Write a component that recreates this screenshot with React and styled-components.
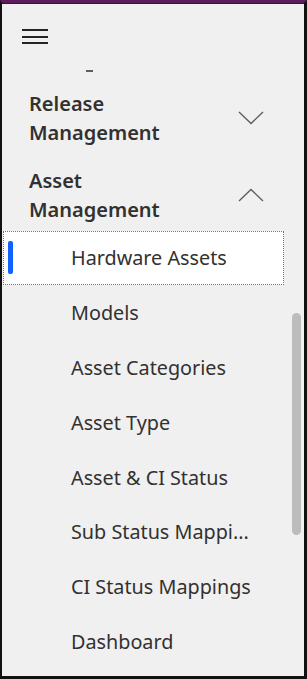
import React from 'react';
import styled, { createGlobalStyle } from 'styled-components';

const Global = createGlobalStyle`
  html, body {
    margin: 0;
    padding: 0;
    background: #ffffff;
  }
  * { box-sizing: border-box; }
`;

const Frame = styled.div`
  position: relative;
  width: 307px;
  height: 679px;
  background: #f0f0f0;
  border-left: 2px solid #111;
  border-right: 3px solid #111;
  border-bottom: 3px solid #111;
  border-top: 3px solid #5a1f5a;
  box-shadow: inset 0 1px 0 #222;
  overflow: hidden;
  font-family: "Noto Sans", "Open Sans", sans-serif;
  color: #323130;
`;

const Hamburger = styled.button`
  display: flex;
  flex-direction: column;
  gap: 4.5px;
  margin: 26px 0 0 20px;
  padding: 0;
  border: 0;
  background: none;
  width: 26px;

  span {
    display: block;
    height: 2px;
    background: #252423;
  }
`;

const Stub = styled.div`
  margin: 26px 0 0 84px;
  width: 7px;
  height: 2px;
  background: #605e5c;
`;

const Group = styled.div`
  display: flex;
  align-items: center;
  justify-content: space-between;
  padding: 0 40px 0 27px;
  margin-top: ${p => p.$top}px;
`;

const GroupTitle = styled.div`
  font-size: 20px;
  font-weight: 600;
  line-height: 29px;
  color: #323130;
`;

const Chevron = ({ up }) => (
  <svg width="26" height="14" viewBox="0 0 26 14">
    <polyline
      points={up ? '1,13 13,1.5 25,13' : '1,1 13,12.5 25,1'}
      fill="none"
      stroke="#605e5c"
      strokeWidth="1.4"
    />
  </svg>
);

const List = styled.ul`
  list-style: none;
  margin: 6.5px 0 0 1px;
  padding: 0;
  width: 281px;
`;

const Item = styled.li`
  position: relative;
  height: 54.8px;
  display: flex;
  align-items: center;
  padding-left: 68px;
  font-size: 19.8px;
  color: #323130;
  white-space: nowrap;
  background: ${p => (p.$active ? '#ffffff' : 'transparent')};
  outline: ${p => (p.$active ? '1px dotted #777' : 'none')};
  outline-offset: -1px;

  &::before {
    content: '';
    display: ${p => (p.$active ? 'block' : 'none')};
    position: absolute;
    left: 5px;
    top: 10px;
    width: 5px;
    height: 33px;
    border-radius: 2px;
    background: #0f62fe;
  }
`;

const ScrollThumb = styled.div`
  position: absolute;
  left: 290px;
  top: 310px;
  width: 9px;
  height: 222px;
  border-radius: 5px;
  background: #bcbcbc;
`;

const items = [
  'Hardware Assets',
  'Models',
  'Asset Categories',
  'Asset Type',
  'Asset & CI Status',
  'Sub Status Mappi...',
  'CI Status Mappings',
  'Dashboard',
];

export default function App() {
  return (
    <>
      <Global />
      <Frame>
        <Hamburger aria-label="menu">
          <span />
          <span />
          <span />
        </Hamburger>
        <Stub />
        <Group $top={17}>
          <GroupTitle>Release<br />Management</GroupTitle>
          <Chevron />
        </Group>
        <Group $top={19}>
          <GroupTitle>Asset<br />Management</GroupTitle>
          <Chevron up />
        </Group>
        <List>
          {items.map((t, i) => (
            <Item key={t} $active={i === 0}>{t}</Item>
          ))}
        </List>
        <ScrollThumb />
      </Frame>
    </>
  );
}
